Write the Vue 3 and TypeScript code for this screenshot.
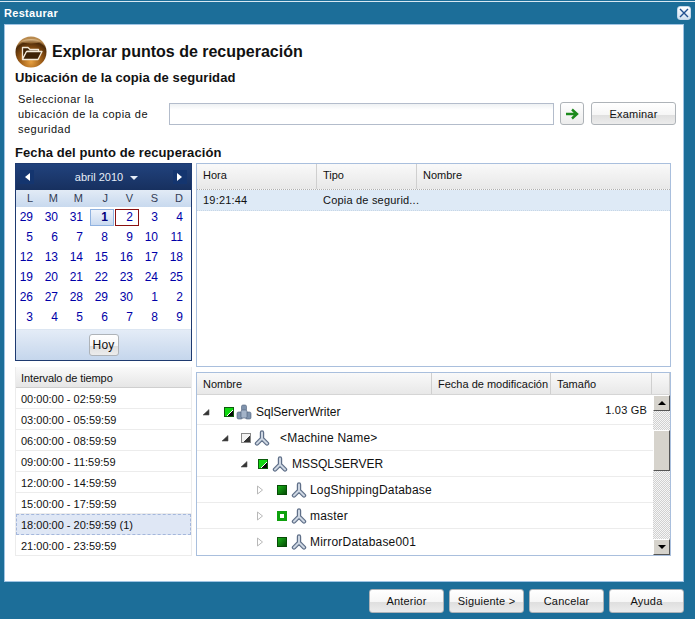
<script setup lang="ts">
const weekdays: string[] = ['L', 'M', 'M', 'J', 'V', 'S', 'D']
const days: number[] = [29, 30, 31, 1, 2, 3, 4, 5, 6, 7, 8, 9, 10, 11, 12, 13, 14, 15, 16, 17, 18, 19, 20, 21, 22, 23, 24, 25, 26, 27, 28, 29, 30, 1, 2, 3, 4, 5, 6, 7, 8, 9]
const intervals: string[] = [
  '00:00:00 - 02:59:59', '03:00:00 - 05:59:59', '06:00:00 - 08:59:59', '09:00:00 - 11:59:59',
  '12:00:00 - 14:59:59', '15:00:00 - 17:59:59', '18:00:00 - 20:59:59 (1)', '21:00:00 - 23:59:59',
]
interface TreeRow { name: string; size: string; level: string; open: boolean; check: string; server: boolean }
const tree: TreeRow[] = [
  { name: 'SqlServerWriter', size: '1.03 GB', level: 'l0', open: true, check: 'half', server: true },
  { name: '<Machine Name>', size: '', level: 'l1', open: true, check: 'gray', server: false },
  { name: 'MSSQLSERVER', size: '', level: 'l2', open: true, check: 'half', server: false },
  { name: 'LogShippingDatabase', size: '', level: 'l3', open: false, check: 'full', server: false },
  { name: 'master', size: '', level: 'l3', open: false, check: 'part', server: false },
  { name: 'MirrorDatabase001', size: '', level: 'l3', open: false, check: 'full', server: false },
]
const footerButtons: string[] = ['Anterior', 'Siguiente >', 'Cancelar', 'Ayuda']
</script>

<template>
  <div class="window">
    <header class="titlebar">
      <span class="title">Restaurar</span>
      <button class="close" aria-label="Cerrar">
        <svg width="10" height="10" viewBox="0 0 10 10"><path d="M1 1L9 9M9 1L1 9" stroke="#1f4f8f" stroke-width="1.4" fill="none" /></svg>
      </button>
    </header>

    <main class="body">
      <div class="heading">
        <svg class="folder" width="32" height="32" viewBox="0 0 32 32">
          <defs>
            <radialGradient id="orb" cx="50%" cy="82%" r="72%">
              <stop offset="0" stop-color="#e8a040" />
              <stop offset="0.5" stop-color="#9a5a16" />
              <stop offset="0.9" stop-color="#4c2a08" />
              <stop offset="1" stop-color="#b98a4e" />
            </radialGradient>
            <linearGradient id="shine" x1="0" y1="0" x2="0" y2="1">
              <stop offset="0" stop-color="#f2dcb8" />
              <stop offset="1" stop-color="#a87434" />
            </linearGradient>
          </defs>
          <circle cx="16" cy="16" r="15.5" fill="url(#orb)" />
          <path d="M6 5.5C10 2 22 2 26 5.5C22 8 10 8 6 5.5Z" fill="url(#shine)" opacity="0.65" />
          <path d="M7.5 23V11.5H13L15 13.5H23.5V15.5H12L7.5 23Z" fill="#3d2206" stroke="#f4ead8" stroke-width="1.3" stroke-linejoin="round" />
          <path d="M7.5 23.5L11.5 15.5H27L23 23.5Z" fill="#3d2206" stroke="#f4ead8" stroke-width="1.3" stroke-linejoin="round" />
        </svg>
        <h1>Explorar puntos de recuperación</h1>
      </div>

      <h2 class="section first">Ubicación de la copia de seguridad</h2>
      <div class="location">
        <label class="loc-label">Seleccionar la<br />ubicación de la copia de<br />seguridad</label>
        <input class="loc-input" type="text" />
        <button class="btn go" aria-label="Ir">
          <svg width="14" height="12" viewBox="0 0 14 12"><path d="M1 6H11M7 1.5L12 6L7 10.5" stroke="#1d8a1d" stroke-width="2.4" fill="none" /></svg>
        </button>
        <button class="btn browse">Examinar</button>
      </div>

      <h2 class="section second">Fecha del punto de recuperación</h2>
      <div class="panels">
        <div class="left">
          <section class="calendar">
            <div class="cal-head">
              <span class="nav"><i class="tri-left"></i></span>
              <span class="month">abril 2010<i class="tri-down"></i></span>
              <span class="nav"><i class="tri-right"></i></span>
            </div>
            <div class="cal-grid weekdays">
              <span v-for="(d, i) in weekdays" :key="i">{{ d }}</span>
            </div>
            <div class="cal-grid dates">
              <span v-for="(d, i) in days" :key="i" :class="{ selected: i === 3, today: i === 4 }">{{ d }}</span>
            </div>
            <div class="cal-foot"><button class="btn today-btn">Hoy</button></div>
          </section>
          <section class="intervals">
            <div class="int-head">Intervalo de tiempo</div>
            <div v-for="(t, i) in intervals" :key="t" class="int-row" :class="{ active: i === 6 }">{{ t }}</div>
          </section>
        </div>

        <div class="right">
          <section class="points">
            <div class="tbl-head points-cols">
              <span>Hora</span><span class="sorted">Tipo</span><span>Nombre</span>
            </div>
            <div class="point-row points-cols">
              <span>19:21:44</span><span>Copia de segurid...</span><span></span>
            </div>
          </section>
          <section class="files">
            <div class="tbl-head files-cols">
              <span>Nombre</span><span>Fecha de modificación</span><span>Tamaño</span><span></span>
            </div>
            <div class="files-body">
              <div class="tree">
                <div v-for="r in tree" :key="r.name" class="tree-row">
                  <div class="tree-name" :class="r.level">
                    <svg class="expander" width="8" height="10" viewBox="0 0 8 10">
                      <path v-if="r.open" d="M1 8L7 2.5V8Z" fill="#333" stroke="#555" stroke-width="0.6" />
                      <path v-else d="M1.5 1L6.5 5L1.5 9Z" fill="#fff" stroke="#b8b8b8" />
                    </svg>
                    <i class="check" :class="r.check"></i>
                    <svg v-if="r.server" class="node" width="16" height="16" viewBox="0 0 16 16">
                      <g fill="#7f93ad" stroke="#4f6078" stroke-width="0.6">
                        <rect x="5.5" y="1" width="5" height="6" rx="1.5" />
                        <rect x="1" y="8" width="5.5" height="7" rx="1.5" />
                        <rect x="9.5" y="8" width="5.5" height="7" rx="1.5" />
                        <rect x="5" y="6" width="6" height="8" rx="1.5" fill="#a3b3c8" />
                      </g>
                    </svg>
                    <svg v-else class="node" width="16" height="16" viewBox="0 0 16 16">
                      <path d="M8 2.5V8.5M8 8.5L3 13.5M8 8.5L13 13.5" stroke="#5f6f88" stroke-width="4.4" stroke-linecap="round" fill="none" />
                      <path d="M8 2.5V8.5M8 8.5L3 13.5M8 8.5L13 13.5" stroke="#cdd6e2" stroke-width="2" stroke-linecap="round" fill="none" />
                    </svg>
                    <span class="tree-text">{{ r.name }}</span>
                  </div>
                  <div class="tree-size">{{ r.size }}</div>
                </div>
              </div>
              <div class="scrollbar">
                <span class="sb-btn"><i class="sb-up"></i></span>
                <span class="sb-thumb"></span>
                <span class="sb-btn sb-end"><i class="sb-down"></i></span>
              </div>
            </div>
          </section>
        </div>
      </div>
    </main>

    <footer class="footer">
      <button v-for="b in footerButtons" :key="b" class="btn foot-btn">{{ b }}</button>
    </footer>
  </div>
</template>

<style scoped>
.window {
  width: 695px;
  height: 619px;
  box-sizing: border-box;
  padding-top: 1px;
  background: #1c6e99;
  display: flex;
  flex-direction: column;
  overflow: hidden;
  font-family: "Liberation Sans", Arial, sans-serif;
  font-size: 11px;
  color: #111;
}
.titlebar {
  height: 22px;
  flex: none;
  border-top: 1px solid #d8e8f2;
  display: flex;
  align-items: center;
  justify-content: space-between;
  padding: 0 4px 0 4px;
}
.title { color: #fff; font-weight: 700; font-size: 11px; letter-spacing: 0.3px; }
.close {
  width: 14px;
  height: 14px;
  padding: 0;
  border: 1px solid #c4d8ea;
  border-radius: 3px;
  background: linear-gradient(#ffffff, #cfe0f0);
  display: flex;
  align-items: center;
  justify-content: center;
}
.body {
  flex: none;
  width: 680px;
  height: 558px;
  margin-left: 4px;
  box-sizing: border-box;
  background: #fff;
  border: 1px solid #9fc4e4;
  padding: 11px 0 0 10px;
}
.heading { display: flex; align-items: center; gap: 5px; height: 32px; }
.folder { flex: none; }
h1 { margin: 0; font-size: 16px; font-weight: 700; color: #111; }
.section { margin: 0; font-size: 13px; font-weight: 700; color: #111; line-height: 16px; letter-spacing: 0.09px; }
.section.first { margin-top: 2px; }
.section.second { margin-top: 9px; }
.location { display: flex; align-items: center; height: 45px; margin-top: 5px; }
.loc-label { width: 154px; padding: 1px 0 0 3px; box-sizing: border-box; line-height: 15px; letter-spacing: 0.5px; white-space: nowrap; }
.loc-input {
  width: 385px;
  height: 22px;
  box-sizing: border-box;
  border: 1px solid #b3bccb;
  background: linear-gradient(#eef1f3, #fff 6px);
  margin-right: 6px;
}
.btn {
  font: inherit;
  color: #111;
  height: 23px;
  padding: 0;
  border: 1px solid #aeb3b8;
  border-radius: 3px;
  background: linear-gradient(#ffffff 0, #f6f6f6 55%, #dfdfdf 56%, #ececec 100%);
  letter-spacing: 0.2px;
}
.go { width: 24px; margin-right: 7px; display: flex; align-items: center; justify-content: center; background: linear-gradient(#fff, #ececec); }
.browse { width: 85px; }
.panels { display: flex; margin-top: 2px; gap: 4px; }
.left { width: 177px; display: flex; flex-direction: column; }
.right { width: 475px; display: flex; flex-direction: column; gap: 5px; }
.calendar {
  height: 198px;
  box-sizing: border-box;
  border: 1px solid #1e3a70;
  display: flex;
  flex-direction: column;
}
.cal-head {
  height: 26px;
  flex: none;
  background: linear-gradient(#21427d, #17305f);
  color: #e6eef8;
  display: flex;
  align-items: center;
  justify-content: space-between;
  padding: 0 4px;
}
.nav { width: 14px; height: 14px; background: #14356f; display: flex; align-items: center; justify-content: center; }
.tri-left { border: 4px solid transparent; border-left: 0; border-right: 5px solid #fff; }
.tri-right { border: 4px solid transparent; border-right: 0; border-left: 5px solid #fff; }
.tri-down { display: inline-block; margin-left: 7px; vertical-align: 1px; border: 4px solid transparent; border-bottom: 0; border-top: 4px solid #e6eef8; }
.month { margin-left: 6px; }
.cal-grid { display: grid; grid-template-columns: repeat(7, 25px); }
.weekdays { height: 17px; flex: none; background: linear-gradient(#e2ebf6, #c8d9ee); color: #333d55; line-height: 17px; }
.weekdays span { text-align: right; padding-right: 8px; }
.dates { grid-auto-rows: 20px; color: #0000a8; height: 121px; flex: none; border-bottom: 1px solid #fff; font-size: 12px; }
.dates span { text-align: right; padding-right: 8px; line-height: 20px; }
.dates span.selected {
  margin: 2px 2px 1px -1px;
  line-height: 15px;
  padding-right: 5px;
  border: 1px solid #8fb2e0;
  background: linear-gradient(#eef3fb, #c9daf0);
  font-weight: 700;
  color: #00007a;
}
.dates span.today {
  margin: 2px 2px 1px -1px;
  line-height: 15px;
  padding-right: 5px;
  border: 1px solid #8b1010;
}
.cal-foot {
  flex: 1;
  background: linear-gradient(#e4ecf7, #c5d6ec);
  border-top: 1px solid #dce6f2;
  display: flex;
  align-items: center;
  justify-content: center;
}
.today-btn { width: 30px; height: 22px; font-size: 12px; }
.intervals { margin-top: 6px; width: 175px; border-right: 1px solid #ececec; border-left: 1px solid #ececec; }
.int-head {
  height: 21px;
  line-height: 22px;
  box-sizing: border-box;
  padding-left: 5px;
  background: linear-gradient(#fafafa, #e6e6e6);
  border-bottom: 1px solid #cfcfcf;
  letter-spacing: -0.1px;
}
.int-row {
  height: 21px;
  line-height: 22px;
  box-sizing: border-box;
  padding-left: 5px;
  border-bottom: 1px solid #ececec;
}
.int-row.active {
  background: #dfe7f5;
  outline: 1px dashed #a4b7dc;
  outline-offset: -1px;
  border-bottom: 0;
}
.points, .files { border: 1px solid #a9bfdd; box-sizing: border-box; }
.points { height: 204px; }
.files { height: 184px; }
.tbl-head {
  background: linear-gradient(#f9f9f9, #e8e8e8);
}
.tbl-head span { border-right: 1px solid #cfcfcf; padding-left: 6px; overflow: hidden; white-space: nowrap; }
.points-cols { display: grid; grid-template-columns: 120px 100px 1fr; }
.points .tbl-head { height: 26px; line-height: 23px; border-bottom: 1px dotted #b0b0b0; box-sizing: border-box; }
.points .tbl-head span:last-child { border-right: 0; }
.point-row {
  height: 21px;
  line-height: 21px;
  background: #deeaf6;
  border-bottom: 1px dotted #c7d6e6;
  box-sizing: border-box;
  letter-spacing: 0.2px;
}
.point-row span { padding-left: 6px; white-space: nowrap; }
.files-cols { display: grid; grid-template-columns: 235px 119px 101px 18px; }
.files .tbl-head { height: 22px; line-height: 22px; border-bottom: 1px solid #d5d5d5; box-sizing: border-box; }
.files-body { display: flex; height: 160px; }
.tree { width: 456px; flex: none; padding-top: 4px; box-sizing: border-box; }
.tree-row {
  height: 26px;
  box-sizing: border-box;
  border-bottom: 1px solid #ececec;
  display: flex;
  align-items: center;
  letter-spacing: 0.2px;
}
.tree-row:last-child { border-bottom: 0; }
.tree-name { width: 235px; flex: none; overflow: hidden; white-space: nowrap; display: flex; align-items: center; box-sizing: border-box; }
.tree-text { margin-left: 4px; font-size: 12px; }
.expander { flex: none; }
.l0 { padding-left: 5px; letter-spacing: 0; }
.l0 .expander { margin-right: 14px; }
.l0 .check { margin-right: 2px; }
.l1 { padding-left: 24px; }
.l1 .expander { margin-right: 12px; }
.l1 .tree-text { margin-left: 10px; }
.l2 { padding-left: 43px; letter-spacing: 0; }
.l2 .expander { margin-right: 10px; }
.l2 .check { margin-right: 4px; }
.l3 { padding-left: 59px; }
.l3 .expander { margin-right: 13px; }
.l3 .check { margin-right: 4px; }
.l3 .tree-text { margin-left: 3px; }
.tree-size { flex: 1; text-align: right; padding-right: 6px; margin-top: -4px; }
.check { width: 10px; height: 10px; flex: none; margin-right: 3px; box-sizing: border-box; border: 1px solid #111; }
.check.half { background: linear-gradient(135deg, #12d812 0 58%, #fff 58% 64%, #0a0a0a 64%); border-color: #0c5c0c; }
.check.gray { background: linear-gradient(135deg, #f2f2f2 0 60%, #333 60%); border-color: #888; }
.check.full { background: linear-gradient(135deg, #17b317, #064c06); border-color: #064c06; }
.check.part { background: #fff; border: 3px solid #0ea10e; }
.node { flex: none; }
.scrollbar {
  width: 17px;
  flex: none;
  display: flex;
  flex-direction: column;
  background: repeating-conic-gradient(#d0d0d0 0 25%, #f6f6f6 0 50%) 0 0 / 2px 2px;
}
.sb-btn {
  height: 16px;
  flex: none;
  box-sizing: border-box;
  background: #d6d3cc;
  border: 1px solid;
  border-color: #fff #555 #555 #fff;
  display: flex;
  align-items: center;
  justify-content: center;
}
.sb-end { margin-top: auto; }
.sb-up { border: 4px solid transparent; border-top: 0; border-bottom: 4px solid #000; }
.sb-down { border: 4px solid transparent; border-bottom: 0; border-top: 4px solid #000; }
.sb-thumb {
  height: 41px;
  margin-top: 19px;
  box-sizing: border-box;
  background: #d6d3cc;
  border: 1px solid;
  border-color: #fff #555 #555 #fff;
}
.footer { flex: 1; display: flex; justify-content: flex-end; gap: 5px; padding: 7px 11px 0 0; }
.foot-btn { width: 75px; height: 24px; }
</style>
